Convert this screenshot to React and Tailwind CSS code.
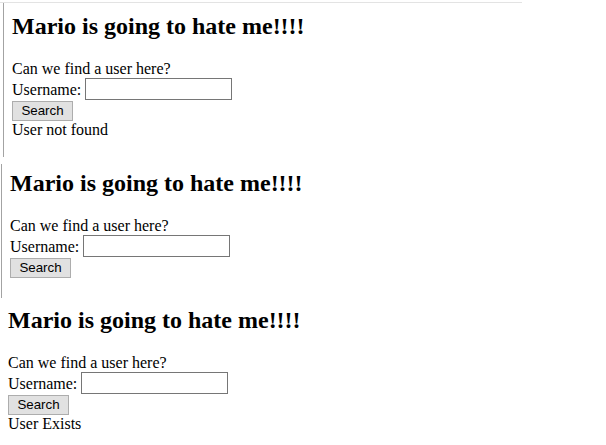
import React from "react";

function SearchBlock({ result, line }) {
  return (
    <div className={`flex ${line === "outer" ? "pl-[3px]" : line === "inner" ? "pl-[1px]" : ""}`}>
      {line === "outer" && <div className="w-px bg-[#a3a3a3] mb-[3px]" />}
      {line === "inner" && <div className="w-px bg-[#a3a3a3] mt-[4px] mb-[-1px]" />}
      <div className="pl-[8px] pb-[19px] text-black">
        <h2 className="mt-[9px] mb-[20px] text-[24px] leading-[28px] font-bold">
          Mario is going to hate me!!!!
        </h2>
        <div className="text-[16px] leading-[18px]">Can we find a user here?</div>
        <div className="flex items-start h-[22px]">
          <span className="mt-[3px] text-[16px] leading-[18px]">Username:</span>
          <input
            type="text"
            className="ml-[4px] w-[147px] h-[22px] border border-[#767676] bg-white outline-none"
          />
        </div>
        <button className="block mt-[1px] h-[20px] w-[61px] border border-[#adadad] bg-[#e1e1e1] text-[13.33px] leading-[18px] font-['Liberation_Sans',Arial,sans-serif]">
          Search
        </button>
        {result && <div className="mb-[2px] text-[16px] leading-[18px]">{result}</div>}
      </div>
    </div>
  );
}

export default function App() {
  return (
    <div className="w-[606px] h-[445px] bg-white overflow-hidden font-['Liberation_Serif','Times_New_Roman',serif]">
      <div className="h-[2px]" />
      <div className="h-px w-[522px] bg-[#e3e3e3]" />
      <SearchBlock line="outer" result="User not found" />
      <SearchBlock line="inner" />
      <SearchBlock result="User Exists" />
    </div>
  );
}
